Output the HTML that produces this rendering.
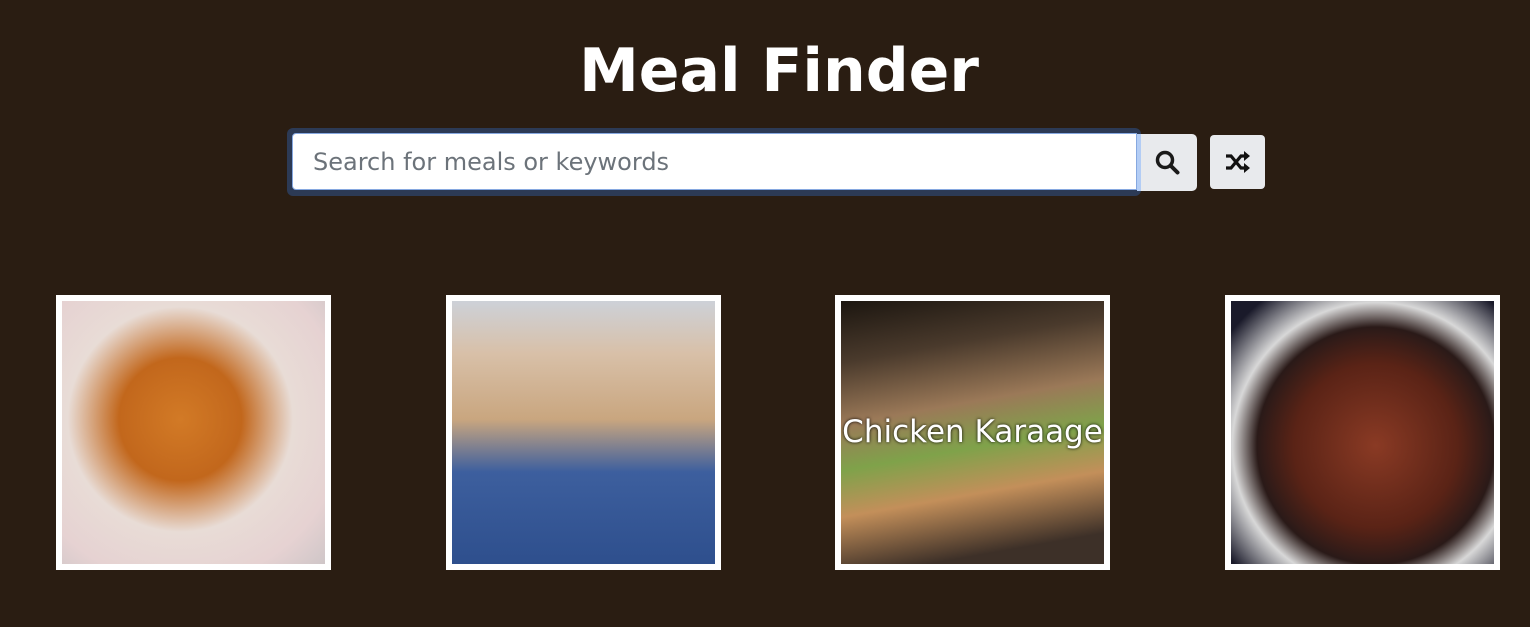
<!DOCTYPE html>
<html><head><meta charset="utf-8"><style>
body{margin:0;width:1530px;height:627px;background:#2a1d12;font-family:"DejaVu Sans","Liberation Sans",sans-serif;overflow:hidden;position:relative}
h1{position:absolute;left:0;width:1558px;top:36px;margin:0;text-align:center;color:#fff;font-size:60px;font-weight:bold;line-height:70px}
.inp{position:absolute;left:287px;top:128px;width:854px;height:68px;background:#2c3a55;border-radius:6px}
.inp div{position:absolute;left:5px;top:5px;height:57px;background:#fff;border:1px solid #86a8e0;border-radius:4px 0 0 4px;color:#6c737a;font-size:24px;line-height:57px;padding-left:20px;box-sizing:border-box;width:845px}
.sb{position:absolute;left:1137px;top:134px;width:60px;height:57px;background:#e8eaed;border-radius:0 5px 5px 0;border-left:4px solid #b3cdf5;box-sizing:border-box}
.rb{position:absolute;left:1210px;top:135px;width:55px;height:54px;background:#e8eaed;border-radius:4px}
.card{position:absolute;top:295px;width:275px;height:275px;background:#fff}
.card div{position:absolute;left:6px;top:6px;width:263px;height:263px}
.t{position:absolute;left:0;top:0;width:275px;height:275px;color:#fff;font-size:31px;line-height:275px;text-align:center;text-shadow:0 0 3px #000}
</style></head><body>
<h1>Meal Finder</h1>
<div class="inp"><div>Search for meals or keywords</div></div>
<div class="sb"><svg width="56" height="56" viewBox="0 0 56 56"><circle cx="24" cy="26" r="7.5" fill="none" stroke="#1a1a1a" stroke-width="3.5"/><path d="M29.5 31.5l7 7" stroke="#1a1a1a" stroke-width="4" stroke-linecap="round"/></svg></div>
<div class="rb"><svg width="55" height="54" viewBox="0 0 55 54"><path d="M16 21h5l10 12h5M16 33h5l10-12h5" fill="none" stroke="#111" stroke-width="3.2"/><path d="M34 16l6 5-6 5zM34 28l6 5-6 5z" fill="#111"/></svg></div>
<div class="card" style="left:56px"><div style="background:radial-gradient(ellipse at 45% 45%,#d27a26 0,#c2671c 30%,#e8dcd6 55%,#e6d2d2 80%,#cfc6c8 100%)"></div></div>
<div class="card" style="left:446px"><div style="background:linear-gradient(180deg,#cdd1d8 0,#d8c0a8 20%,#c9a67f 45%,#3d5f9e 65%,#2e4f8d 100%)"></div></div>
<div class="card" style="left:835px"><div style="background:linear-gradient(170deg,#1c1610 0,#4a3a2c 20%,#9b7958 40%,#7fa24a 55%,#c38f5a 70%,#3d3028 90%)"></div><span class="t">Chicken Karaage</span></div>
<div class="card" style="left:1225px"><div style="background:radial-gradient(ellipse at 55% 55%,#8a3a24 0,#5a2316 40%,#2a1a18 58%,#d8d8d8 70%,#1a1a2a 90%)"></div></div>
</body></html>
